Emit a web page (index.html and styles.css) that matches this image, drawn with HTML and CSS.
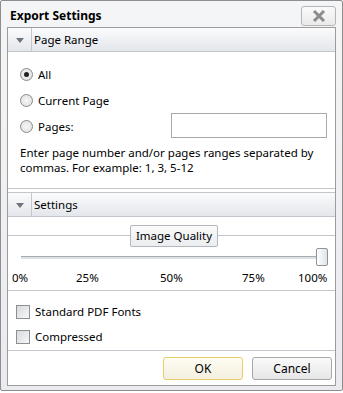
FILE: index.html
```html
<!DOCTYPE html>
<html lang="en">
<head>
    <meta charset="UTF-8">
    <title>Export Settings</title>
    <link rel="stylesheet" href="styles.css">
</head>
<body>
    <div class="dialog">
        <div class="titlebar">
            <span class="title">Export Settings</span>
            <button class="close-button" aria-label="Close">
                <svg width="14" height="12" viewBox="0 0 14 12">
                    <path d="M2 1 L12 11 M12 1 L2 11" stroke="#8c8c8c" stroke-width="3"/>
                </svg>
            </button>
        </div>
        <div class="content">
            <div class="section-header">
                <span class="arrow"></span>
                <span class="section-title">Page Range</span>
            </div>
            <div class="page-range">
                <label class="radio-row"><span class="radio checked"></span>All</label>
                <label class="radio-row"><span class="radio"></span>Current Page</label>
                <div class="radio-row pages-row">
                    <label class="radio-row"><span class="radio"></span>Pages:</label>
                    <input type="text" class="pages-input">
                </div>
                <p class="hint">Enter page number and/or pages ranges separated by commas. For example: 1, 3, 5-12</p>
            </div>
            <div class="section-header second">
                <span class="arrow"></span>
                <span class="section-title">Settings</span>
            </div>
            <div class="quality">
                <span class="quality-label">Image Quality</span>
            </div>
            <div class="slider">
                <div class="track"></div>
                <div class="thumb"></div>
            </div>
            <div class="ticks">
                <span>0%</span>
                <span>25%</span>
                <span>50%</span>
                <span>75%</span>
                <span>100%</span>
            </div>
            <div class="options">
                <label class="check-row"><span class="checkbox"></span>Standard PDF Fonts</label>
                <label class="check-row"><span class="checkbox"></span>Compressed</label>
            </div>
            <div class="footer">
                <button class="btn btn-ok">OK</button>
                <button class="btn">Cancel</button>
            </div>
        </div>
    </div>
</body>
</html>
```

FILE: styles.css
```css
body {
    margin: 0;
    font-family: "Noto Sans", "DejaVu Sans", sans-serif;
    font-size: 11.5px;
    color: #000;
    background: #fff;
}
.dialog {
    width: 343px;
    height: 391px;
    box-sizing: border-box;
    border: 1px solid #8e8e8e;
    border-radius: 2px;
    background: linear-gradient(#f4f5f7, #e9ebee);
    padding: 0 6px 4px 6px;
    display: flex;
    flex-direction: column;
}
.titlebar {
    height: 26px;
    display: flex;
    align-items: center;
    justify-content: space-between;
    padding: 0 0 0 3px;
}
.title {
    font-weight: bold;
    font-size: 12px;
    margin-top: 2px;
}
.close-button {
    width: 35px;
    height: 20px;
    margin-top: 4px;
    border: 1px solid #b5b5b5;
    border-radius: 3px;
    background: linear-gradient(#fafafa, #eaeaea);
    display: flex;
    align-items: center;
    justify-content: center;
    padding: 0;
}
.content {
    flex: 1;
    background: #fff;
    border: 1px solid #9c9c9c;
    display: flex;
    flex-direction: column;
}
.section-header {
    height: 23px;
    flex-shrink: 0;
    display: flex;
    align-items: center;
    background: linear-gradient(#fbfbfc, #e3e6eb);
    border-bottom: 1px solid #c3c7cd;
}
.section-header.second {
    border-top: 1px solid #c3c7cd;
    margin-top: 3px;
}
.arrow {
    width: 23px;
    height: 100%;
    border-right: 1px solid #c3c7cd;
    display: flex;
    align-items: center;
    justify-content: center;
}
.arrow::before {
    content: "";
    border-left: 4px solid transparent;
    border-right: 4px solid transparent;
    border-top: 5px solid #6e7380;
    margin-top: 1px;
}
.section-title {
    padding-left: 2px;
}
.page-range {
    padding: 9px 12px 0 12px;
    border-bottom: 1px solid #c3c7cd;
    height: 137px;
    flex-shrink: 0;
    box-sizing: border-box;
}
.radio-row {
    display: flex;
    align-items: center;
    height: 26px;
}
.pages-row {
    justify-content: space-between;
}
.radio {
    width: 11px;
    height: 11px;
    border: 1px solid #8b8b8b;
    border-radius: 50%;
    background: radial-gradient(#f7f7f7, #dcdcdc);
    margin-right: 5px;
    display: flex;
    align-items: center;
    justify-content: center;
}
.radio.checked::before {
    content: "";
    width: 5px;
    height: 5px;
    border-radius: 50%;
    background: #222;
}
.pages-input {
    width: 156px;
    height: 25px;
    box-sizing: border-box;
    border: 1px solid #a9a9a9;
    margin-right: -4px;
    margin-top: -2px;
}
.hint {
    margin: 6px 0 0 0;
    line-height: 15px;
}
.quality {
    height: 1px;
    flex-shrink: 0;
    background: #c3c7cd;
    margin-top: 18px;
    display: flex;
    align-items: center;
    justify-content: center;
}
.quality-label {
    border: 1px solid #b4b8be;
    border-radius: 2px;
    background: linear-gradient(#fafafa, #ebedf0);
    padding: 2px 5px 3px 5px;
    margin-left: 5px;
}
.slider {
    position: relative;
    height: 18px;
    flex-shrink: 0;
    margin: 12px 7px 0 13px;
    display: flex;
    align-items: center;
}
.track {
    flex: 1;
    height: 2px;
    border-top: 1px solid #a7acb3;
    background: #dde0e5;
}
.thumb {
    position: absolute;
    right: 0;
    top: 0;
    width: 10px;
    height: 16px;
    border: 1px solid #8d939b;
    border-radius: 2px;
    background: linear-gradient(90deg, #fff, #dfe2e6);
}
.ticks {
    display: grid;
    grid-template-columns: 64px 84px 82px 56px auto;
    padding: 4px 0 0 4px;
    height: 25px;
    line-height: 16px;
    flex-shrink: 0;
    box-sizing: border-box;
    border-bottom: 1px solid #c3c7cd;
}
.options {
    padding: 8px 8px 0 8px;
    height: 60px;
    flex-shrink: 0;
    box-sizing: border-box;
    border-bottom: 1px solid #c3c7cd;
}
.check-row {
    display: flex;
    align-items: center;
    height: 25px;
}
.checkbox {
    width: 12px;
    height: 12px;
    border: 1px solid #8f8f8f;
    background: linear-gradient(135deg, #d6d9de, #f7f8f9);
    margin-right: 5px;
}
.footer {
    flex: 1;
    display: flex;
    justify-content: flex-end;
    align-items: center;
    gap: 9px;
    padding-right: 3px;
}
.btn {
    width: 80px;
    height: 23px;
    font-family: inherit;
    font-size: 12px;
    border: 1px solid #a8a8a8;
    border-radius: 3px;
    background: linear-gradient(#fafafa, #e6e6e6);
}
.btn-ok {
    border-color: #e8cf6a;
    background: linear-gradient(#fffdf2, #f3efe0);
}
```
